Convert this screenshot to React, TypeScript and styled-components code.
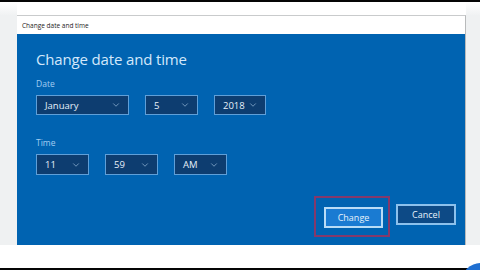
import React from "react";
import styled, { createGlobalStyle } from "styled-components";
import { ChevronDown } from "lucide-react";

const GlobalStyle = createGlobalStyle`
  html, body {
    margin: 0;
    padding: 0;
    background: #ffffff;
  }
  body {
    font-family: "Open Sans", "Noto Sans", sans-serif;
  }
`;

const panelBlue = "#0063b1";
const fieldNavy = "#0d3d70";
const labelBlue = "#a3cdf2";

const Screen = styled.div`
  position: relative;
  width: 480px;
  height: 270px;
  display: flex;
  flex-direction: column;
  overflow: hidden;
  background: #ffffff;
`;

const BlackStrip = styled.div`
  height: 2px;
  flex: none;
  background: #050505;
`;

const TopGap = styled.div`
  height: 13px;
  flex: none;
  display: flex;
  justify-content: space-between;
`;

const GapGutter = styled.div<{ $w: number }>`
  width: ${(p) => p.$w}px;
  background: linear-gradient(#ffffff, #f0f2f3);
`;

const Stage = styled.div`
  flex: none;
  height: 230px;
  display: flex;
`;

const Gutter = styled.div<{ $w: number }>`
  flex: none;
  width: ${(p) => p.$w}px;
  background: #eff1f2;
`;

const BottomGap = styled.div`
  flex: 1;
  background: #ffffff;
`;

const Window = styled.div`
  flex: 1;
  display: flex;
  flex-direction: column;
  border-top: 1px solid #c9cbcc;
  border-right: 1px solid #b8babb;
`;

const TitleBar = styled.div`
  height: 18px;
  flex: none;
  display: flex;
  align-items: center;
  padding-left: 5px;
  background: #ffffff;
  color: #1d1d1d;
  font-size: 6.5px;
`;

const Panel = styled.div`
  flex: 1;
  background: ${panelBlue};
  padding: 14px 9px 0 19px;
  display: flex;
  flex-direction: column;
`;

const Heading = styled.h1`
  margin: 0;
  font-size: 15px;
  font-weight: 400;
  line-height: 22px;
  color: #d3e8fb;
  letter-spacing: -0.15px;
`;

const FieldLabel = styled.div<{ $top: number }>`
  margin-top: ${(p) => p.$top}px;
  font-size: 8.5px;
  line-height: 12px;
  color: ${labelBlue};
`;

const FieldRow = styled.div`
  margin-top: 5px;
  display: flex;
  gap: 16px;
`;

const Select = styled.div<{ $w: number; $h: number }>`
  box-sizing: border-box;
  width: ${(p) => p.$w}px;
  height: ${(p) => p.$h}px;
  display: flex;
  align-items: center;
  justify-content: space-between;
  padding: 0 7px 0 8px;
  background: ${fieldNavy};
  border: 1px solid #5f9fd8;
  color: #e6f0fa;
  font-size: 9.5px;
`;

const Chevron = styled(ChevronDown)`
  color: #b7d6f2;
`;

const Actions = styled.div`
  margin-top: auto;
  margin-bottom: 17px;
  display: flex;
  justify-content: flex-end;
  gap: 13px;
`;

const Focus = styled.div`
  position: relative;
`;

const FocusRing = styled.div`
  position: absolute;
  left: -10px;
  top: -8px;
  right: -7px;
  bottom: -9px;
  border: 2px solid #84396b;
  pointer-events: none;
`;

const Button = styled.button<{ $primary?: boolean }>`
  box-sizing: border-box;
  width: ${(p) => (p.$primary ? 59 : 60)}px;
  height: 21px;
  padding: 0;
  font-family: inherit;
  font-size: 9px;
  color: #e8f2fb;
  background: ${(p) => (p.$primary ? "#1a7bd2" : "#0d4a86")};
  border: 2px solid ${(p) => (p.$primary ? "#b9dcf6" : "#8cc1ec")};
`;

const Bubble = styled.div`
  position: absolute;
  left: 461px;
  top: 263px;
  width: 40px;
  height: 40px;
  border-radius: 50%;
  background: #1f6fd1;
`;

function Dropdown({ value, w, h }: { value: string; w: number; h: number }) {
  return (
    <Select $w={w} $h={h}>
      <span>{value}</span>
      <Chevron size={10} strokeWidth={1.4} />
    </Select>
  );
}

export default function App() {
  return (
    <Screen>
      <GlobalStyle />
      <BlackStrip />
      <TopGap>
        <GapGutter $w={17} />
        <GapGutter $w={14} />
      </TopGap>
      <Stage>
        <Gutter $w={17} />
        <Window>
          <TitleBar>Change date and time</TitleBar>
          <Panel>
            <Heading>Change date and time</Heading>
            <FieldLabel $top={8}>Date</FieldLabel>
            <FieldRow>
              <Dropdown value="January" w={93} h={20} />
              <Dropdown value="5" w={53} h={20} />
              <Dropdown value="2018" w={52} h={20} />
            </FieldRow>
            <FieldLabel $top={22}>Time</FieldLabel>
            <FieldRow>
              <Dropdown value="11" w={53} h={21} />
              <Dropdown value="59" w={53} h={21} />
              <Dropdown value="AM" w={53} h={21} />
            </FieldRow>
            <Actions>
              <Focus>
                <Button $primary>Change</Button>
                <FocusRing />
              </Focus>
              <Button>Cancel</Button>
            </Actions>
          </Panel>
        </Window>
        <Gutter $w={14} />
      </Stage>
      <BottomGap />
      <BlackStrip />
      <Bubble />
    </Screen>
  );
}
